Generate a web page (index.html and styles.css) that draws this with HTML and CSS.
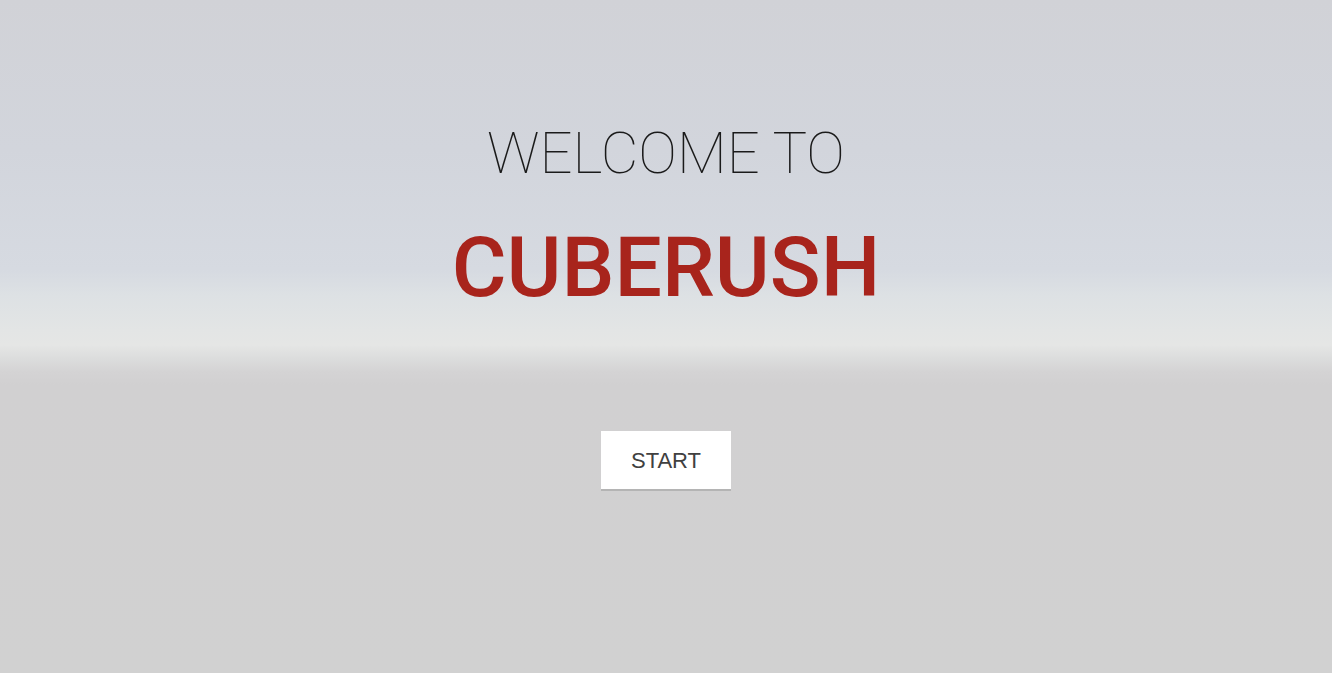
FILE: index.html
```html
<!DOCTYPE html>
<html>
<head>
<meta charset="utf-8">
<link rel="stylesheet" href="styles.css">
</head>
<body>
<main class="screen">
  <h2 class="welcome">WELCOME TO</h2>
  <h1 class="title">CUBERUSH</h1>
  <button class="start">START</button>
</main>
</body>
</html>
```
FILE: styles.css
```css
html, body {
  margin: 0;
  padding: 0;
  height: 100%;
}
body {
  background: linear-gradient(to bottom,
    #d1d2d7 0px,
    #d2d5dc 150px,
    #d6dae1 270px,
    #dde1e4 295px,
    #e3e5e5 330px,
    #e5e6e5 345px,
    #dcdddd 358px,
    #d4d3d4 372px,
    #d1d0d1 385px,
    #d1d1d1 673px);
  overflow: hidden;
}
.screen {
  display: flex;
  flex-direction: column;
  align-items: center;
  height: 673px;
}
.welcome {
  margin: 119px 0 0 0;
  font-family: Roboto, sans-serif;
  font-weight: 100;
  font-size: 58px;
  line-height: 68px;
  color: #1a1a1a;
}
.title {
  margin: 32px 0 0 0;
  font-family: Roboto, sans-serif;
  font-weight: 500;
  font-size: 84px;
  line-height: 98px;
  color: #a8241c;
}
.start {
  margin-top: 114px;
  width: 130px;
  height: 60px;
  border: none;
  border-bottom: 2px solid #b4b4b4;
  background: #fff;
  font-family: "Liberation Sans", Arial, sans-serif;
  font-size: 22px;
  color: #404040;
  padding: 2px 0 0 0;
  box-sizing: border-box;
  cursor: pointer;
}
```
